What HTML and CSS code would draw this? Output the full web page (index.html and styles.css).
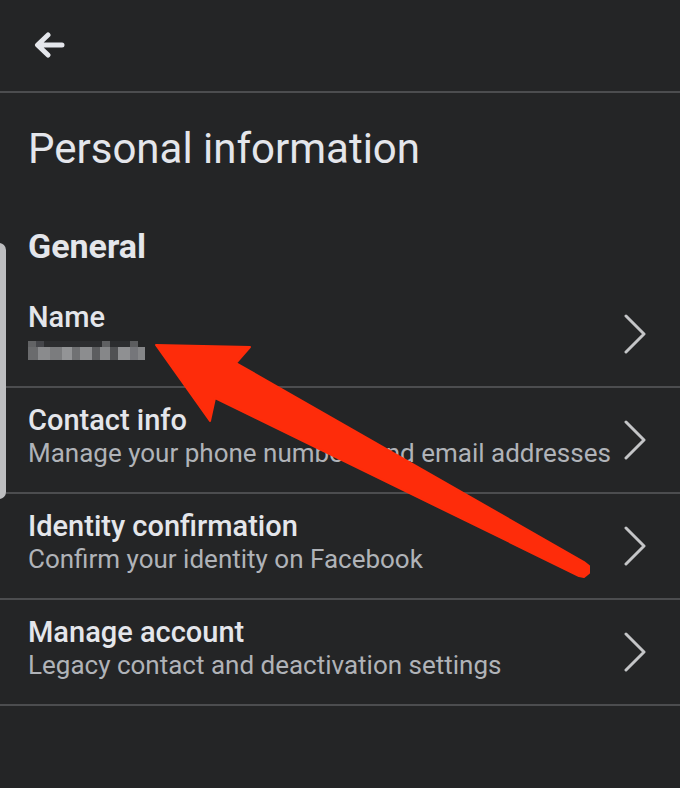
FILE: index.html
```html
<!DOCTYPE html>
<html lang="en">
<head>
    <meta charset="UTF-8">
    <meta name="viewport" content="width=device-width, initial-scale=1.0">
    <title>Personal information</title>
    <link rel="stylesheet" href="styles.css">
</head>
<body>
    <div class="screen">
        <!-- top bar -->
        <header class="topbar">
            <svg class="back-icon" viewBox="0 0 32 26" width="32" height="26">
                <path d="M29 13H5M15 3L4.5 13L15 23" fill="none" stroke="#e4e6eb" stroke-width="5" stroke-linecap="round" stroke-linejoin="round"/>
            </svg>
        </header>

        <h1 class="page-title">Personal information</h1>
        <h2 class="section-title">General</h2>

        <div class="settings-list">
            <div class="row">
                <div class="row-text">
                    <div class="row-title">Name</div>
                    <div class="blurred-name"></div>
                </div>
                <svg class="chevron" viewBox="0 0 24 40" width="24" height="40">
                    <path d="M3 2L21 20L3 38" fill="none" stroke="#c4c5c7" stroke-width="3" stroke-linecap="round" stroke-linejoin="round"/>
                </svg>
            </div>
            <div class="row">
                <div class="row-text">
                    <div class="row-title">Contact info</div>
                    <div class="row-sub">Manage your phone numbers and email addresses</div>
                </div>
                <svg class="chevron" viewBox="0 0 24 40" width="24" height="40">
                    <path d="M3 2L21 20L3 38" fill="none" stroke="#c4c5c7" stroke-width="3" stroke-linecap="round" stroke-linejoin="round"/>
                </svg>
            </div>
            <div class="row">
                <div class="row-text">
                    <div class="row-title">Identity confirmation</div>
                    <div class="row-sub">Confirm your identity on Facebook</div>
                </div>
                <svg class="chevron" viewBox="0 0 24 40" width="24" height="40">
                    <path d="M3 2L21 20L3 38" fill="none" stroke="#c4c5c7" stroke-width="3" stroke-linecap="round" stroke-linejoin="round"/>
                </svg>
            </div>
            <div class="row">
                <div class="row-text">
                    <div class="row-title">Manage account</div>
                    <div class="row-sub">Legacy contact and deactivation settings</div>
                </div>
                <svg class="chevron" viewBox="0 0 24 40" width="24" height="40">
                    <path d="M3 2L21 20L3 38" fill="none" stroke="#c4c5c7" stroke-width="3" stroke-linecap="round" stroke-linejoin="round"/>
                </svg>
            </div>
        </div>

        <!-- edge handle + annotation arrow drawn over the page -->
        <div class="edge-handle"></div>
        <svg class="annotation" viewBox="0 0 680 788" width="680" height="788">
            <polygon points="156,345 250,347 236,363 584,562 589,566 589,573 584,577 579,576 215,398 210,421" fill="#fe2c0a" stroke="#fe2c0a" stroke-width="2" stroke-linejoin="round"/>
        </svg>
    </div>
</body>
</html>
```

FILE: styles.css
```css
* {
    margin: 0;
    padding: 0;
    box-sizing: border-box;
}

body {
    background-color: #242526;
    font-family: Roboto, 'Liberation Sans', sans-serif;
    color: #e4e6eb;
}

.screen {
    position: relative;
    width: 680px;
    min-height: 788px;
    overflow: hidden;
}

.topbar {
    height: 93px;
    display: flex;
    align-items: center;
    padding-left: 33px;
    border-bottom: 2px solid #4c4d4f;
}

.back-icon {
    display: block;
    margin-top: -1px;
}

.page-title {
    margin-top: 31px;
    padding-left: 28px;
    font-size: 42px;
    line-height: 50px;
    font-weight: 400;
}

.section-title {
    margin-top: 52px;
    margin-bottom: 16px;
    padding-left: 28px;
    font-size: 34px;
    line-height: 40px;
    font-weight: 700;
}

.row {
    display: flex;
    align-items: center;
    justify-content: space-between;
    min-height: 106px;
    padding: 0 33px 0 28px;
    border-bottom: 2px solid #4c4d4f;
}

.row-text {
    padding-bottom: 9px;
}

.row-title {
    font-size: 29px;
    line-height: 34px;
    font-weight: 500;
    color: #e4e6eb;
}

.row-sub {
    font-size: 26px;
    line-height: 32px;
    color: #b0b3b8;
}

.blurred-name {
    width: 117px;
    height: 19px;
    margin-top: 7px;
    background:
        linear-gradient(90deg, #6a6b6d 0 10px, #8a8b8d 10px 22px, #7b7c7e 22px 34px, #939496 34px 44px, #707173 44px 52px, #8c8d8f 52px 64px, #5c5d5f 64px 72px, #868789 72px 82px, #505153 82px 90px, #8f9092 90px 102px, #75767a 102px 110px, #858688 110px 117px) bottom / 100% 13px no-repeat,
        linear-gradient(90deg, #626365 0 8px, #45464a 8px 16px, #2c2d2f 16px 74px, #5f6062 74px 82px, #2c2d2f 82px 102px, #5c5d5f 102px 110px, transparent 110px) top / 100% 6px no-repeat;
}

.chevron {
    display: block;
    flex-shrink: 0;
}

.edge-handle {
    position: absolute;
    left: -8px;
    top: 243px;
    width: 14px;
    height: 256px;
    border-radius: 7px;
    background-color: #bdbec0;
}

.annotation {
    position: absolute;
    top: 0;
    left: 0;
    pointer-events: none;
}
```
